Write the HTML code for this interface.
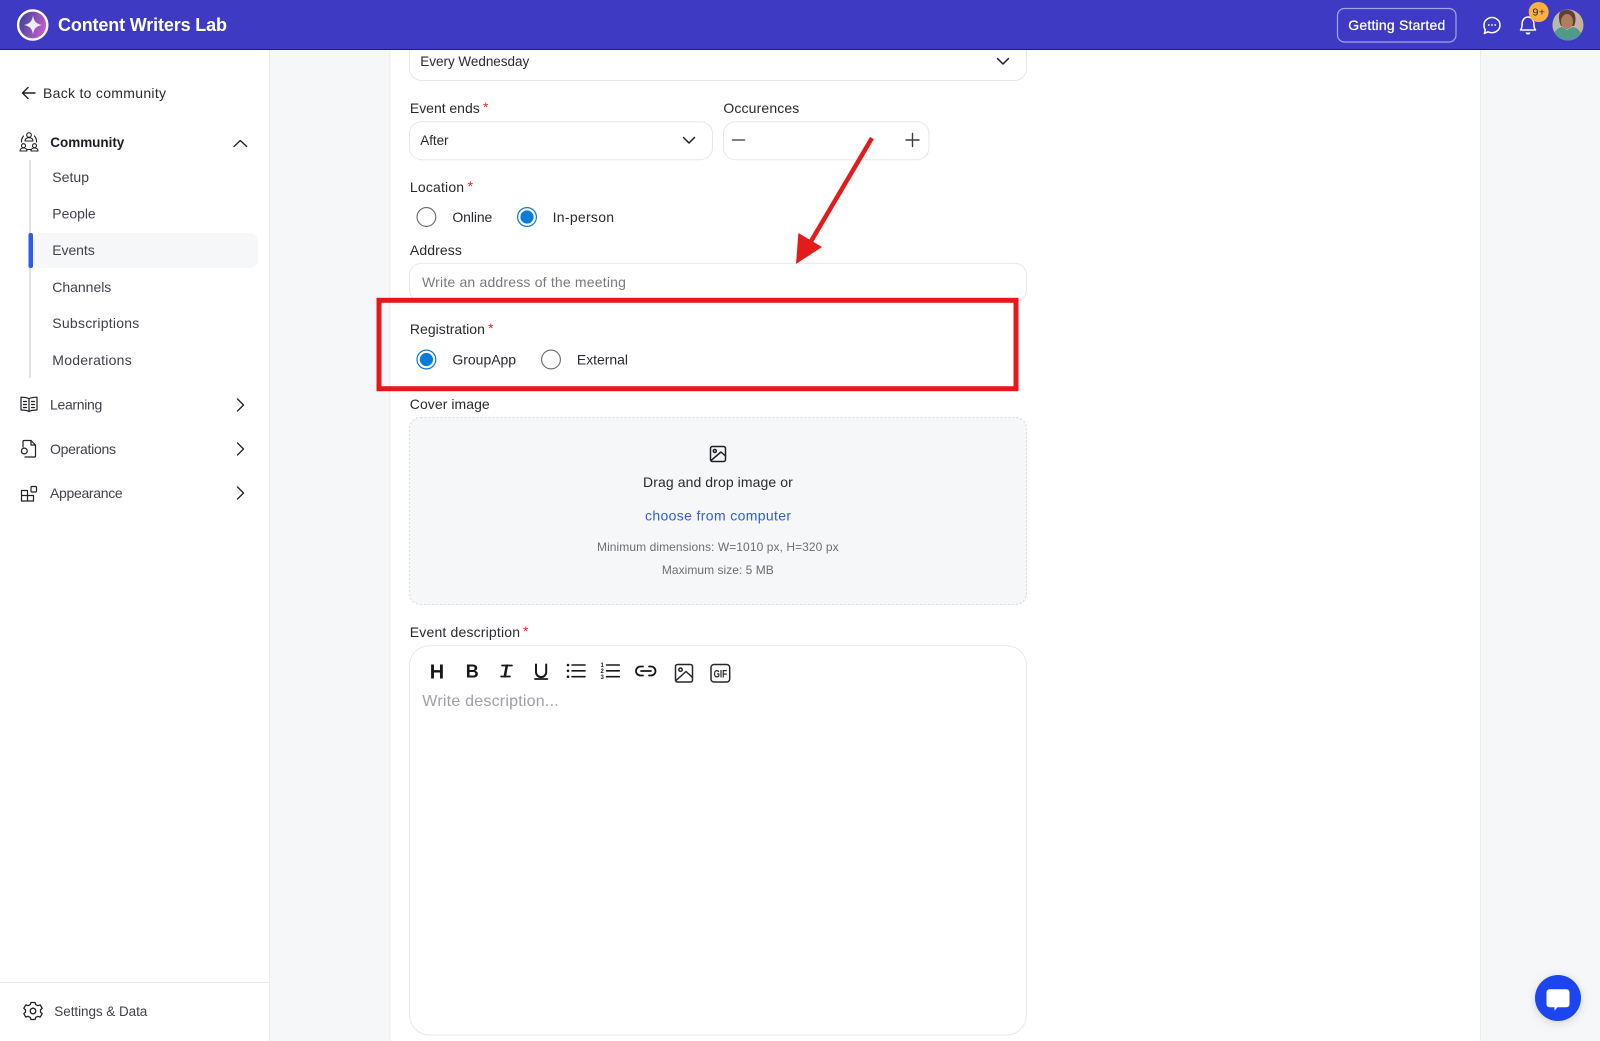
<!DOCTYPE html>
<html lang="en">
<head>
<meta charset="utf-8">
<title>Content Writers Lab</title>
<style>
html,body{margin:0;padding:0;background:#f6f7f9;width:1600px;height:1041px;overflow:hidden}
svg{display:block;filter:blur(.25px)}
text{font-family:"Liberation Sans",Arial,sans-serif;font-size:14px;fill:#2a2b32}
.s{fill:#3f424c}
.m{font-size:12px;fill:#6b6e76}
.r{fill:#e5252a;font-size:14px}
.i{fill:none;stroke:#1f2026;stroke-width:1.3;stroke-linecap:round;stroke-linejoin:round}
.b{fill:#fff;stroke:#e5e7eb;stroke-width:1}
.t{fill:none;stroke:#17181c;stroke-width:1.9;stroke-linecap:round;stroke-linejoin:round}
</style>
</head>
<body>
<svg xmlns="http://www.w3.org/2000/svg" width="1600" height="1041" viewBox="0 0 1600 1041">
<defs>
<linearGradient id="lg" x1="0" y1="0" x2="1" y2="0.4"><stop offset="0" stop-color="#27408f"/><stop offset="1" stop-color="#c25ccd"/></linearGradient>
<clipPath id="avc"><circle cx="1568" cy="25" r="15.5"/></clipPath>
<filter id="sh" x="-30%" y="-30%" width="160%" height="160%"><feGaussianBlur stdDeviation="4"/></filter>
</defs>

<!-- backgrounds -->
<rect width="1600" height="1041" fill="#f6f7f9"/>
<rect x="390" y="50" width="1090" height="991" fill="#fff"/>
<rect x="389.500" y="50" width="1" height="991" fill="#e9ebee"/>
<rect x="1480" y="50" width="1" height="991" fill="#e9ebee"/>
<rect x="0" y="50" width="269" height="991" fill="#fff"/>
<rect x="269" y="50" width="1" height="991" fill="#eaecef"/>

<!-- sidebar -->
<path class="i" d="M35 93H22.800M28 87.500L22.500 93L28 98.500" style="stroke-width:1.400"/>
<text x="43" y="98" textLength="123" lengthAdjust="spacing">Back to community</text>

<g class="i" style="stroke-width:1.100">
<circle cx="29" cy="135" r="2.300"/>
<path d="M25 141c0-2 1.500-3.300 4-3.300s4 1.300 4 3.300Z"/>
<circle cx="23.500" cy="145.700" r="2"/><circle cx="34.500" cy="145.700" r="2"/>
<path d="M20 151c0-1.800 1.400-3 3.500-3s3.500 1.200 3.500 3ZM31 151c0-1.800 1.400-3 3.500-3s3.500 1.200 3.500 3Z"/>
<path d="M23.500 136a8.500 8.500 0 0 0-2 6M34.500 136a8.500 8.500 0 0 1 2 6M27 149.500h4"/>
</g>
<text x="50.300" y="147" textLength="74" lengthAdjust="spacing" style="font-weight:700;font-size:13.500px;fill:#1c1d22">Community</text>
<path class="i" d="M234 146.500L240.300 140.500L246.700 146.500" style="stroke-width:1.300"/>

<rect x="29" y="160" width="2" height="218" fill="#dfe1e5"/>
<rect x="33" y="233" width="225" height="35" rx="8" fill="#f6f7f9"/>
<rect x="28.500" y="233" width="4.500" height="35" rx="2" fill="#2f5ce8"/>
<text class="s" x="52.300" y="182" textLength="36.700" lengthAdjust="spacing">Setup</text>
<text class="s" x="52.300" y="218.500" textLength="43.400" lengthAdjust="spacing">People</text>
<text class="s" x="52.300" y="255" textLength="42.400" lengthAdjust="spacing">Events</text>
<text class="s" x="52.300" y="292" textLength="59" lengthAdjust="spacing">Channels</text>
<text class="s" x="52.300" y="328" textLength="87" lengthAdjust="spacing">Subscriptions</text>
<text class="s" x="52.300" y="365" textLength="79.400" lengthAdjust="spacing">Moderations</text>

<g class="i" style="stroke-width:1.200">
<path d="M29 398.700c-2-1-5-1.500-8-1.500v12.800c3 0 6 .3 8 1.500c2-1.200 5-1.500 8-1.500v-12.800c-3 0-6 .5-8 1.500ZM29 398.700v12.800"/>
<path d="M23.500 401.500h3M23.500 404.500h3M23.500 407.500h3M31.500 401.500h3M31.500 404.500h3M31.500 407.500h3"/>
</g>
<text class="s" x="50" y="409.500" textLength="52.300" lengthAdjust="spacing">Learning</text>
<path class="i" d="M237.500 399L243.500 405L237.500 411" style="stroke-width:1.300"/>

<g class="i" style="stroke-width:1.200">
<path d="M23 447v-5.500a1 1 0 0 1 1-1h7l4.500 4.500v11a1 1 0 0 1-1 1H25M31 440.500v4.500h4.500"/>
<circle cx="24.300" cy="451" r="2.900"/>
</g>
<text class="s" x="50" y="454" textLength="66" lengthAdjust="spacing">Operations</text>
<path class="i" d="M237.500 443L243.500 449L237.500 455" style="stroke-width:1.300"/>

<g class="i" style="stroke-width:1.200">
<path d="M21.500 490.500h6v10.500h-6ZM27.500 495.500h6v5.500h-6ZM21.500 495.500h6"/>
<rect x="31" y="486.500" width="5.500" height="5.500" rx="1"/>
</g>
<text class="s" x="50" y="498" textLength="72.700" lengthAdjust="spacing">Appearance</text>
<path class="i" d="M237.500 487L243.500 493L237.500 499" style="stroke-width:1.300"/>

<rect x="0" y="982" width="269" height="1" fill="#e8eaed"/>
<g class="i" style="stroke-width:1.300">
<path d="M31 1002.500h4l.8 2.200 2.200 1 2.200-.8 2 3.400-1.700 1.600v2.200l1.700 1.600-2 3.400-2.200-.8-2.200 1-.8 2.200h-4l-.8-2.200-2.200-1-2.200.8-2-3.400 1.700-1.600v-2.200l-1.700-1.600 2-3.400 2.200.8 2.200-1Z"/>
<circle cx="33" cy="1011" r="2.800"/>
</g>
<text class="s" x="54.300" y="1016" textLength="93" lengthAdjust="spacing" style="font-size:13.500px">Settings &amp; Data</text>

<!-- form -->
<rect class="b" x="409.500" y="30" width="617" height="50.500" rx="12"/>
<text x="420.300" y="66" textLength="108.900" lengthAdjust="spacing" style="font-size:13.500px">Every Wednesday</text>
<path class="i" d="M997.500 58.500L1003 64L1008.500 58.500" style="stroke-width:1.500"/>

<text x="409.900" y="113" textLength="69.800" lengthAdjust="spacing">Event ends</text>
<text class="r" x="483" y="112">*</text>
<text x="723.400" y="113" textLength="75.900" lengthAdjust="spacing">Occurences</text>
<rect class="b" x="409.500" y="121.700" width="303" height="38" rx="12"/>
<text x="420.300" y="145" textLength="28.200" lengthAdjust="spacing" style="font-size:13.500px">After</text>
<path class="i" d="M683.500 137.500L689 143L694.500 137.500" style="stroke-width:1.500"/>
<rect class="b" x="723.500" y="121.700" width="205.500" height="38" rx="12"/>
<path d="M732.500 140h12" stroke="#55575e" stroke-width="1.600" stroke-linecap="round"/>
<path d="M906 140h13M912.500 133.500v13" stroke="#3a3c42" stroke-width="1.400" stroke-linecap="round"/>

<text x="409.900" y="192" textLength="54.200" lengthAdjust="spacing">Location</text>
<text class="r" x="467.600" y="191">*</text>
<circle cx="426.400" cy="217" r="9.400" fill="#fff" stroke="#66686e" stroke-width="1.100"/>
<text x="452.400" y="222" textLength="39.900" lengthAdjust="spacing">Online</text>
<circle cx="527" cy="217" r="9.400" fill="#fff" stroke="#0b7bd8" stroke-width="1.200"/>
<circle cx="527" cy="217" r="6.600" fill="#0b7bd8"/>
<text x="552.600" y="222" textLength="61.500" lengthAdjust="spacing">In-person</text>

<text x="409.900" y="255" textLength="52" lengthAdjust="spacing">Address</text>
<rect class="b" x="409.500" y="263.200" width="617" height="38.500" rx="12"/>
<text x="422" y="287" textLength="203.900" lengthAdjust="spacing" style="fill:#777a81">Write an address of the meeting</text>

<text x="409.900" y="334" textLength="75" lengthAdjust="spacing">Registration</text>
<text class="r" x="488" y="333">*</text>
<circle cx="426.400" cy="359.500" r="9.400" fill="#fff" stroke="#0b7bd8" stroke-width="1.200"/>
<circle cx="426.400" cy="359.500" r="6.600" fill="#0b7bd8"/>
<text x="452.400" y="364.500" textLength="63.700" lengthAdjust="spacing">GroupApp</text>
<circle cx="551" cy="359.500" r="9.400" fill="#fff" stroke="#66686e" stroke-width="1.100"/>
<text x="576.900" y="364.500" textLength="51.100" lengthAdjust="spacing">External</text>

<!-- annotation -->
<rect x="379" y="300.300" width="637" height="88.400" fill="none" stroke="#e8171a" stroke-width="5"/>
<path d="M872 138L810 243" stroke="#e41b1b" stroke-width="4.500" fill="none"/>
<path d="M796 264L798.400 233L822 247Z" fill="#e41b1b"/>

<text x="409.800" y="409" textLength="79.900" lengthAdjust="spacing">Cover image</text>
<rect x="409.500" y="417.500" width="617" height="187" rx="11" fill="#f6f7f9" stroke="#d6d9de" stroke-width="1" stroke-dasharray="2 2"/>
<g class="i" style="stroke-width:1.500">
<rect x="710.500" y="446.500" width="15" height="15" rx="2"/>
<circle cx="714.800" cy="451" r="1.500"/>
<path d="M711 460.500L721 452L725.500 456"/>
</g>
<text x="643" y="487" textLength="149.800" lengthAdjust="spacing">Drag and drop image or</text>
<text x="645" y="520.500" textLength="146.100" lengthAdjust="spacing" style="fill:#2f5ce8">choose from computer</text>
<text class="m" x="597" y="551" textLength="241.600" lengthAdjust="spacing">Minimum dimensions: W=1010 px, H=320 px</text>
<text class="m" x="661.900" y="574" textLength="111.900" lengthAdjust="spacing">Maximum size: 5 MB</text>

<text x="409.800" y="637" textLength="110.200" lengthAdjust="spacing">Event description</text>
<text class="r" x="523" y="636">*</text>
<rect class="b" x="409.500" y="645.700" width="617" height="389.300" rx="20"/>

<!-- toolbar -->
<text x="429.800" y="678.700" style="font-size:20px;font-weight:700;fill:#17181c">H</text>
<text x="465.800" y="677.300" style="font-size:18px;font-weight:700;fill:#17181c">B</text>
<text x="503" y="677.300" style="font-size:18px;font-weight:700;font-style:italic;fill:#17181c">I</text>
<path class="t" d="M502 665.500h10M501 676.500h9" style="stroke-width:1.700"/>
<path class="t" d="M536 664.500v7.500a5.100 5.100 0 0 0 10.200 0v-7.500" style="stroke-width:2"/>
<path class="t" d="M535 679h12.400" style="stroke-width:1.800"/>
<g class="t" style="stroke-width:1.600">
<path d="M572 665h13M572 670.800h13M572 676.700h13"/>
</g>
<circle cx="568" cy="665" r="1.300" fill="#17181c"/><circle cx="568" cy="670.800" r="1.300" fill="#17181c"/><circle cx="568" cy="676.700" r="1.300" fill="#17181c"/>
<g class="t" style="stroke-width:1.600"><path d="M606.500 665h12.800M606.500 670.800h12.800M606.500 676.700h12.800"/></g>
<text x="600.500" y="667" style="font-size:6px;font-weight:700;fill:#17181c">1</text>
<text x="600.500" y="673" style="font-size:6px;font-weight:700;fill:#17181c">2</text>
<text x="600.500" y="679" style="font-size:6px;font-weight:700;fill:#17181c">3</text>
<path class="t" d="M643 666.500h-2.500a4.500 4.500 0 0 0 0 9h2.500M649 666.500h2a4.500 4.500 0 0 1 0 9h-2M641 671h10" style="stroke-width:1.800"/>
<g class="t" style="stroke-width:1.500;stroke:#26272c">
<rect x="675.500" y="664.500" width="17" height="17.500" rx="2"/>
<circle cx="680.500" cy="669.700" r="1.700"/>
<path d="M676 680.500L686 671.500L692 677"/>
</g>
<rect x="711" y="664.500" width="18.700" height="17.500" rx="3" fill="none" stroke="#26272c" stroke-width="1.500"/>
<text x="713.600" y="677.300" textLength="13.500" lengthAdjust="spacingAndGlyphs" style="font-size:11px;font-weight:700;fill:#26272c">GIF</text>
<text x="422.300" y="706" textLength="136.400" lengthAdjust="spacing" style="font-size:16px;fill:#9ca0a8">Write description...</text>

<!-- header -->
<rect width="1600" height="49.500" fill="#3e3ac3"/>
<rect y="49" width="1600" height="1" fill="#1d15a8"/>
<circle cx="32.700" cy="25" r="14.600" fill="url(#lg)" stroke="#fff" stroke-width="2.400"/>
<path d="M33 15.500C34 21.500 36 23.700 42 25C36 26.300 34 28.500 33 34.500C32 28.500 30 26.300 24 25C30 23.700 32 21.500 33 15.500Z" fill="#f1ecfb"/>
<text x="58" y="31" textLength="169" lengthAdjust="spacing" style="font-size:18px;font-weight:700;fill:#fff">Content Writers Lab</text>
<rect x="1337.500" y="8.500" width="118.500" height="33.500" rx="7" fill="none" stroke="#a5a3e3" stroke-width="1.200"/>
<text x="1348.300" y="30" textLength="97" lengthAdjust="spacing" style="font-size:14px;fill:#fff;stroke:#fff;stroke-width:.25">Getting Started</text>
<path d="M1492 17.500a8 7.600 0 0 1 0 15.200c-1.400 0-2.800-.3-4-.9l-3.600 1.700.9-3.600a7.400 7.400 0 0 1-1.300-4.800 8 7.600 0 0 1 8-7.600Z" fill="none" stroke="#fff" stroke-width="1.500" stroke-linejoin="round"/>
<circle cx="1488.800" cy="25" r=".9" fill="#fff"/><circle cx="1492" cy="25" r=".9" fill="#fff"/><circle cx="1495.200" cy="25" r=".9" fill="#fff"/>
<path d="M1520.500 30c1.300-1.600 1.600-3 1.600-6 0-4 2.500-7 5.900-7s5.900 3 5.900 7c0 3 .3 4.400 1.600 6Z" fill="none" stroke="#fff" stroke-width="1.500" stroke-linejoin="round"/>
<path d="M1525.500 32.500c.5 1.500 1.400 2 2.500 2s2-.5 2.500-2Z" fill="#fff"/>
<circle cx="1538.700" cy="12" r="10" fill="#fbb040"/>
<text x="1532.500" y="15.500" textLength="12.500" lengthAdjust="spacing" style="font-size:10.500px;fill:#2a2430">9+</text>
<circle cx="1568" cy="25" r="15.500" fill="#c4b3a2"/>
<g clip-path="url(#avc)">
<rect x="1552" y="9" width="8" height="32" fill="#b7b9ac"/>
<path d="M1560 12c4-3 11-3 14 1 2 3 2 9 0 13h-13c-2-4-3-10-1-14Z" fill="#5e4034"/>
<ellipse cx="1567" cy="21.500" rx="6" ry="7.500" fill="#b27c60"/>
<path d="M1552 42c1-10 5-14 10-15l5 3 6-3c5 1 9 5 11 15Z" fill="#4f9a88"/>
</g>

<!-- chat -->
<circle cx="1558" cy="1000" r="24" fill="#9aa3b5" opacity=".35" filter="url(#sh)"/>
<circle cx="1558" cy="998" r="23" fill="#1c45f0"/>
<path d="M1549.500 989.300h17a3 3 0 0 1 3 3v12a3 3 0 0 1-3 3h-9l-3 3.500v-3.500h-5a3 3 0 0 1-3-3v-12a3 3 0 0 1 3-3Z" fill="#fff"/>
</svg>
</body>
</html>
